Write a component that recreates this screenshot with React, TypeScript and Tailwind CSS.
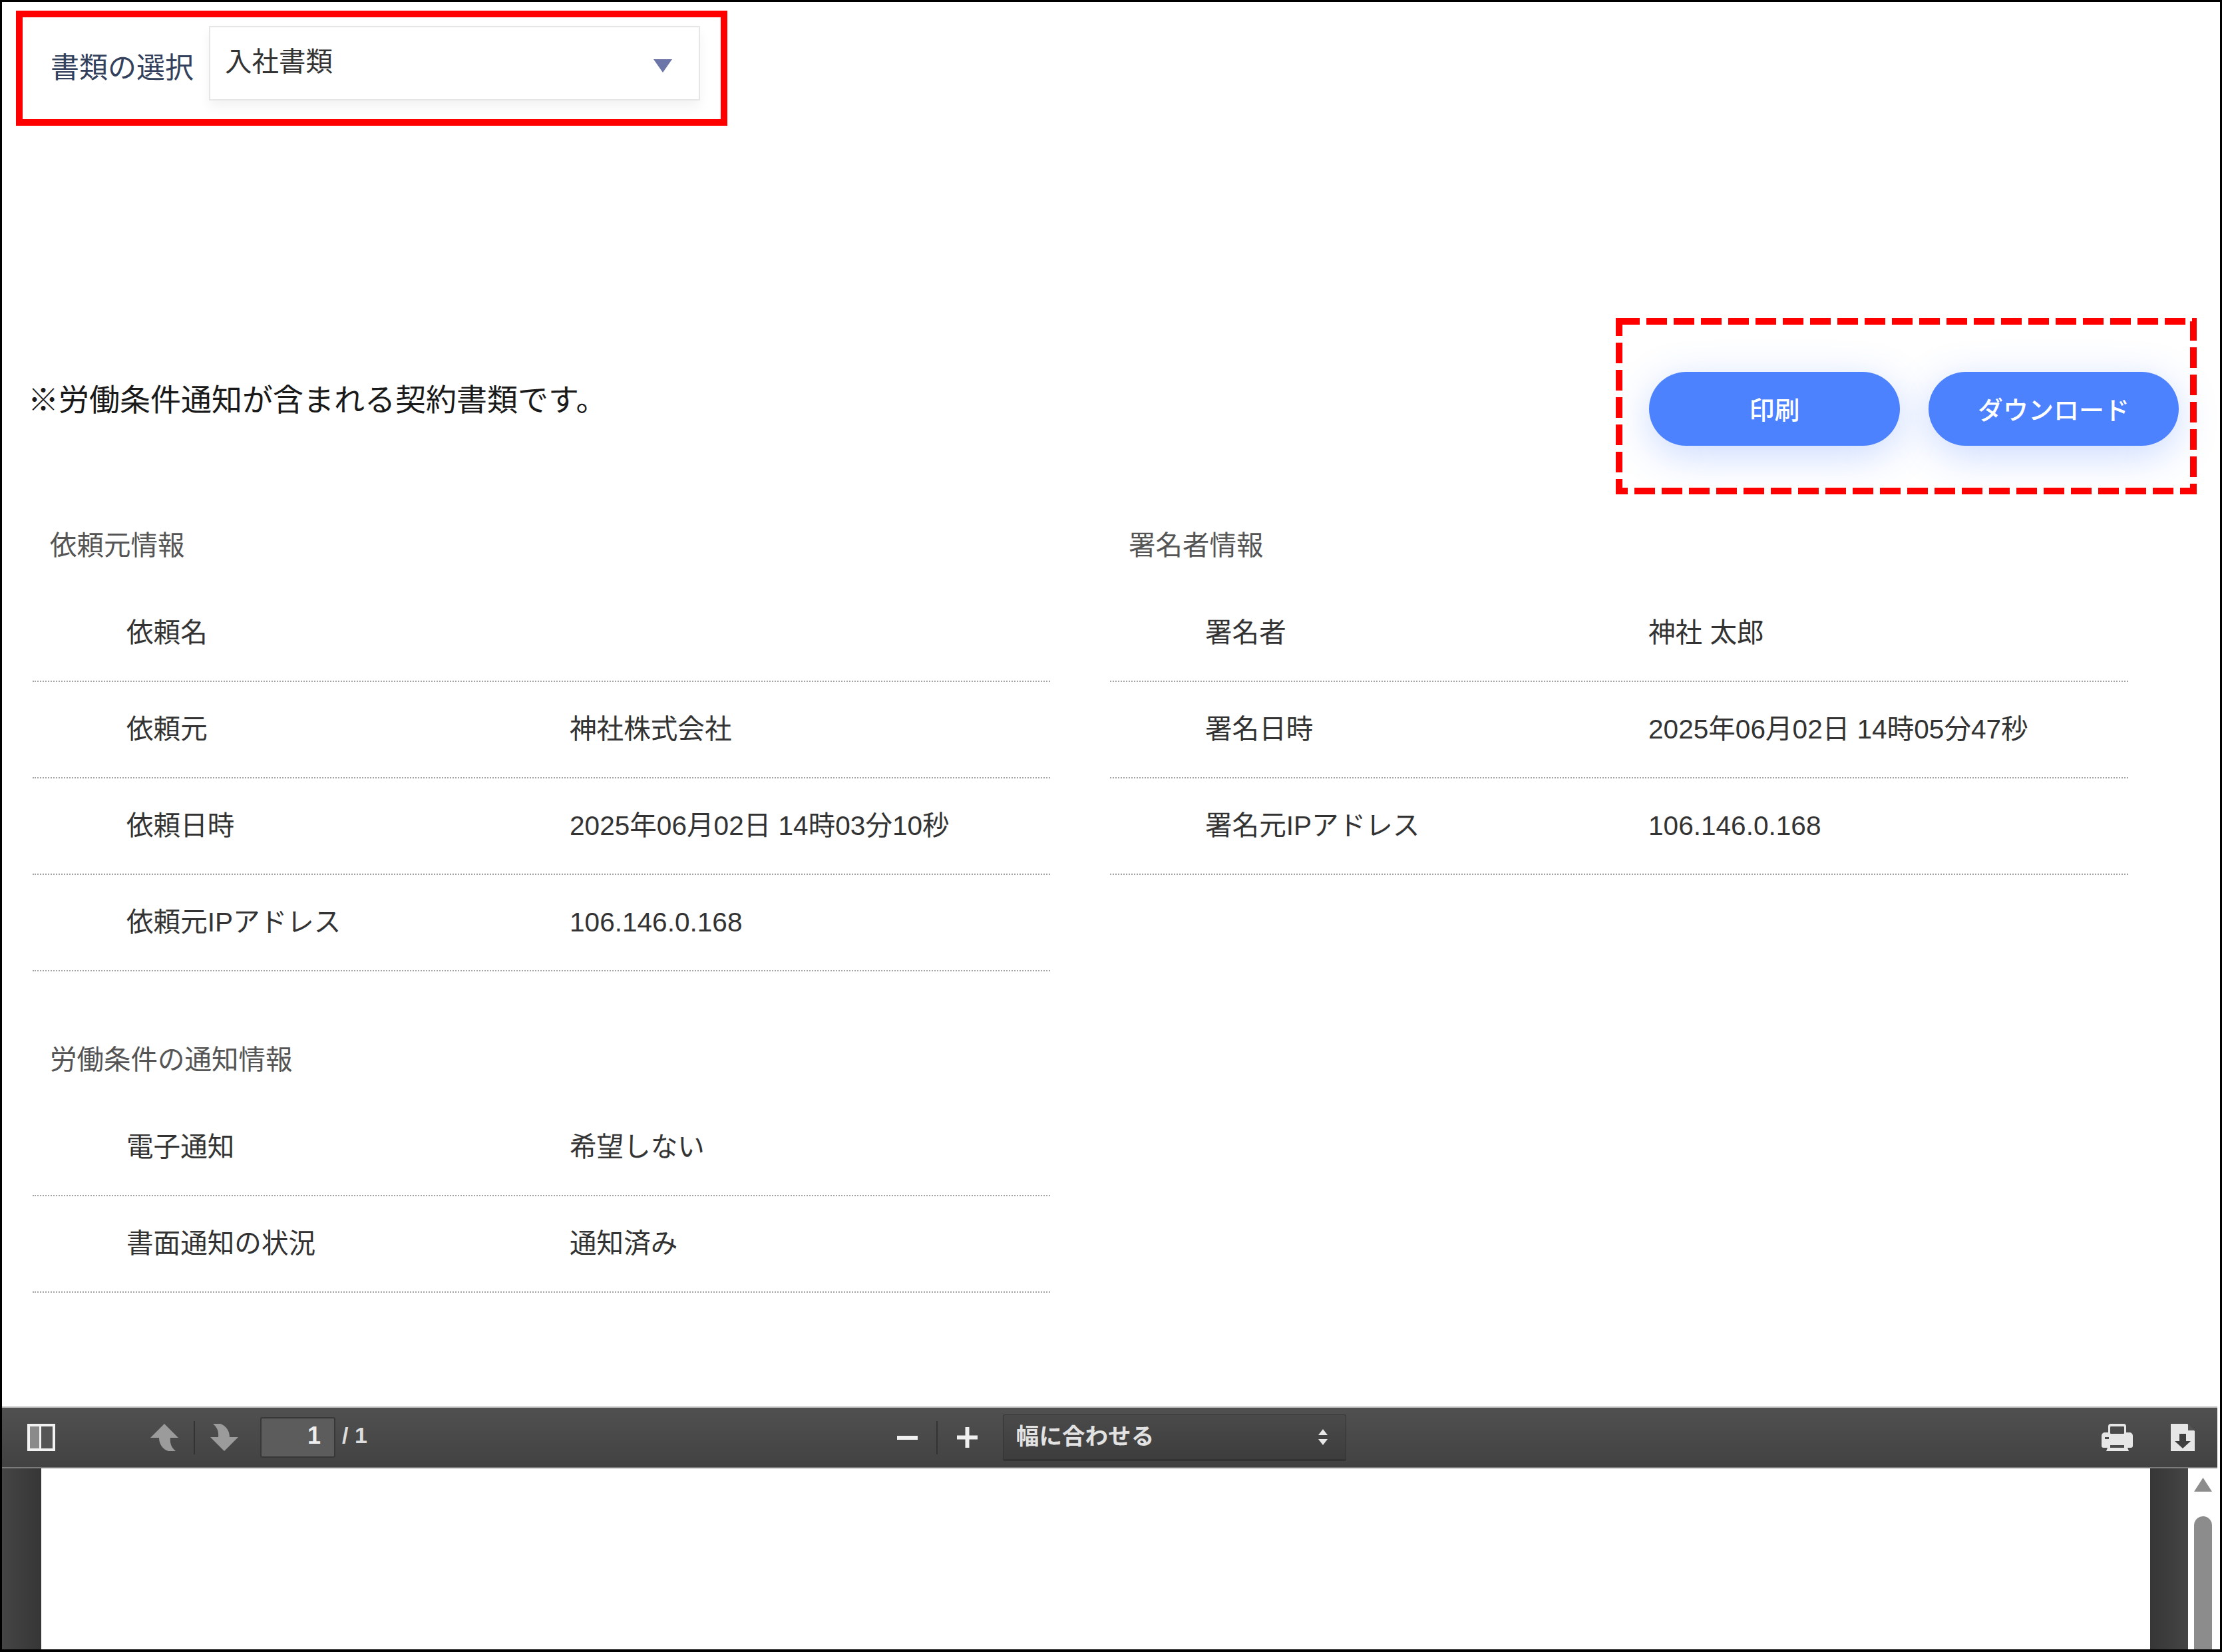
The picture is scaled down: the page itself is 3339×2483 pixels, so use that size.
import clsx from 'clsx';

type InfoItem = {
  label: string;
  value?: string;
};

const requesterInfo: InfoItem[] = [
  { label: '依頼名' },
  { label: '依頼元', value: '神社株式会社' },
  { label: '依頼日時', value: '2025年06月02日 14時03分10秒' },
  { label: '依頼元IPアドレス', value: '106.146.0.168' },
];

const noticeInfo: InfoItem[] = [
  { label: '電子通知', value: '希望しない' },
  { label: '書面通知の状況', value: '通知済み' },
];

const signerInfo: InfoItem[] = [
  { label: '署名者', value: '神社 太郎' },
  { label: '署名日時', value: '2025年06月02日 14時05分47秒' },
  { label: '署名元IPアドレス', value: '106.146.0.168' },
];

function InfoSection({
  title,
  items,
  left = false,
}: {
  title: string;
  items: InfoItem[];
  left?: boolean;
}) {
  return (
    <section>
      <h2
        className={clsx(
          'flex h-[110px] items-center pb-[10px] text-[40.5px] text-[#555555]',
          left ? 'pl-[26px]' : 'pl-[28px]',
        )}
      >
        {title}
      </h2>
      {items.map((item) => (
        <div
          key={item.label}
          className={clsx(
            'flex h-[145px] items-center border-b-2 border-dotted border-[#a3a3a3] text-[40.6px] text-[#333333]',
            left ? 'pl-[141px]' : 'pl-[143px]',
          )}
        >
          <div className="w-[666px] shrink-0">{item.label}</div>
          <div>{item.value}</div>
        </div>
      ))}
    </section>
  );
}

function ArrowIcon({ className }: { className: string }) {
  return (
    <svg viewBox="0 0 42 41" className={className}>
      <path
        d="M21 0 L42 21 H30 C29 30 32 36 38 41 H27 C18 38 13 30 13 21 H0 Z"
        fill="#9b9b9b"
      />
    </svg>
  );
}

function ToolbarDivider() {
  return <div className="h-[50px] w-[2px] bg-[#333333]" />;
}

function Toolbar() {
  return (
    <div className="flex h-[93px] items-center border-t-2 border-b-2 border-t-[#b5b5b5] border-b-[#7c7c7c] bg-gradient-to-b from-[#505050] to-[#424242] text-[#eeeeee]">
      {/* sidebar toggle */}
      <svg viewBox="0 0 42 41" className="ml-[38px] h-[41px] w-[42px]">
        <rect x="2" y="2" width="38" height="37" fill="#555555" stroke="#f2f2f2" strokeWidth="4" />
        <rect x="4" y="4" width="14" height="33" fill="#8a8a8a" />
        <rect x="18" y="2" width="3" height="37" fill="#f2f2f2" />
      </svg>

      <ArrowIcon className="ml-[143px] h-[41px] w-[42px]" />
      <div className="ml-[23px]">
        <ToolbarDivider />
      </div>
      <ArrowIcon className="ml-[23px] h-[41px] w-[42px] rotate-180" />

      <div className="ml-[33px] flex h-[61px] w-[113px] items-center justify-end rounded-[3px] border-2 border-[#383838] bg-[#5c5c5c] pb-[6px] pr-[20px] text-[36px] font-bold">
        1
      </div>
      <div className="ml-[10px] pb-[6px] text-[34px] font-bold text-[#dddddd]">/ 1</div>

      <div className="ml-[796px] h-[6px] w-[31px] bg-[#f0f0f0]" />
      <div className="ml-[28px]">
        <ToolbarDivider />
      </div>
      <svg viewBox="0 0 31 31" className="ml-[29px] h-[31px] w-[31px]">
        <path d="M12.5 0h6v12.5H31v6H18.5V31h-6V18.5H0v-6h12.5z" fill="#f0f0f0" />
      </svg>

      <div className="ml-[38px] flex h-[70px] w-[516px] items-center justify-between rounded-[3px] border border-b-[3px] border-[#333333] bg-gradient-to-b from-[#4a4a4a] to-[#3d3d3d] pl-[19px] pr-[26px] text-[34.6px] font-bold text-[#e2e2e2]">
        <span>幅に合わせる</span>
        <svg viewBox="0 0 16 24" className="h-[24px] w-[16px]">
          <path d="M8 0l7 9H1z M8 24l-7-9h14z" fill="#e8e8e8" />
        </svg>
      </div>

      <div className="flex-1" />

      {/* print */}
      <svg viewBox="0 0 47 41" className="h-[41px] w-[47px]">
        <path
          d="M10 13V4a4 4 0 0 1 4-4h19a4 4 0 0 1 4 4v9h5a5 5 0 0 1 5 5v15a3 3 0 0 1-3 3h-5l2 5H7l2-5H3a3 3 0 0 1-3-3V18a5 5 0 0 1 5-5z"
          fill="#e6e6e6"
        />
        <rect x="13" y="4" width="21" height="11" rx="1" fill="#4a4a4a" />
        <rect x="5" y="20" width="6" height="3" fill="#4a4a4a" />
        <rect x="13" y="32" width="21" height="4" fill="#4a4a4a" />
      </svg>

      {/* save */}
      <svg viewBox="0 0 36 41" className="ml-[57px] mr-[34px] h-[41px] w-[36px]">
        <path d="M0 0h25l11 11v30H0z" fill="#e6e6e6" />
        <path d="M26 0l10 10H26z" fill="#555555" />
        <path d="M13 15h10v11h7L18 37 6 26h7z" fill="#3f3f3f" />
      </svg>
    </div>
  );
}

function Viewer() {
  return (
    <div className="flex h-[272px]">
      <div className="w-[59px] bg-gradient-to-r from-[#454545] to-[#363636]" />
      <div className="flex-1 bg-white" />
      <div className="w-[57px] bg-gradient-to-r from-[#363636] to-[#454545]" />
      <div className="flex w-[44px] flex-col items-center bg-white pt-[14px]">
        <svg viewBox="0 0 27 21" className="h-[21px] w-[27px]">
          <path d="M13.5 0L27 21H0z" fill="#8c8c8c" />
        </svg>
        <div className="mt-[37px] w-[27px] flex-1 rounded-t-full bg-[#8c8c8c]" />
      </div>
    </div>
  );
}

export default function App() {
  return (
    <div className="relative flex h-[2483px] w-[3339px] flex-col border-t-[3px] border-r-[3px] border-b-[4px] border-l-[3px] border-black bg-white [font-family:'Liberation_Sans','Noto_Sans_CJK_JP',sans-serif]">
      <div className="box-content flex h-[112px] items-start pt-[36px]">
        <label className="ml-[73px] w-[238px] pt-[34px] text-[43px] leading-[58px] text-[#33415c]">
          書類の選択
        </label>
        <div className="flex h-[112px] w-[738px] items-start justify-between border-2 border-[#e6e6e6] bg-white pl-[22px] pr-[40px] pt-[24px] text-[40.5px] leading-[56px] text-[#333333] shadow-[0_10px_16px_rgba(0,0,0,0.05)]">
          <span>入社書類</span>
          <svg viewBox="0 0 28 20" className="mt-[24px] h-[20px] w-[28px]">
            <path d="M0 0h28L14 20z" fill="#6b75a8" />
          </svg>
        </div>
      </div>

      <div className="mt-[408px] flex h-[111px] items-start pl-[39px] pr-[62px]">
        <p className="pt-[10px] text-[46px] leading-[64px] text-[#1a1a1a]">
          ※労働条件通知が含まれる契約書類です。
        </p>
        <div className="ml-auto flex gap-[43px]">
          <button className="h-[111px] w-[377px] rounded-full bg-[#4d82ff] pt-[6px] text-[38px] font-medium text-white shadow-[0_14px_60px_rgba(77,130,255,0.3)]">
            印刷
          </button>
          <button className="h-[111px] w-[376px] rounded-full bg-[#4d82ff] pt-[6px] text-[38px] font-medium text-white shadow-[0_14px_60px_rgba(77,130,255,0.3)]">
            ダウンロード
          </button>
        </div>
      </div>

      <div className="mt-[100px] grid grid-cols-[1529px_1530px] gap-x-[90px] pl-[46px]">
        <div className="flex flex-col gap-[83px]">
          <InfoSection left title="依頼元情報" items={requesterInfo} />
          <InfoSection left title="労働条件の通知情報" items={noticeInfo} />
        </div>
        <div>
          <InfoSection title="署名者情報" items={signerInfo} />
        </div>
      </div>

      <div className="mt-auto pr-[4px]">
        <Toolbar />
        <Viewer />
      </div>

      {/* annotations over the screenshot */}
      <div className="absolute left-[21px] top-[13px] h-[173px] w-[1069px] border-[10px] border-[#ff0000]" />
      <svg className="absolute left-[2425px] top-[475px] h-[265px] w-[873px]" viewBox="0 0 873 265">
        <rect
          x="5"
          y="5"
          width="863"
          height="255"
          fill="none"
          stroke="#ff0000"
          strokeWidth="10"
          strokeDasharray="31 10"
        />
      </svg>
    </div>
  );
}
